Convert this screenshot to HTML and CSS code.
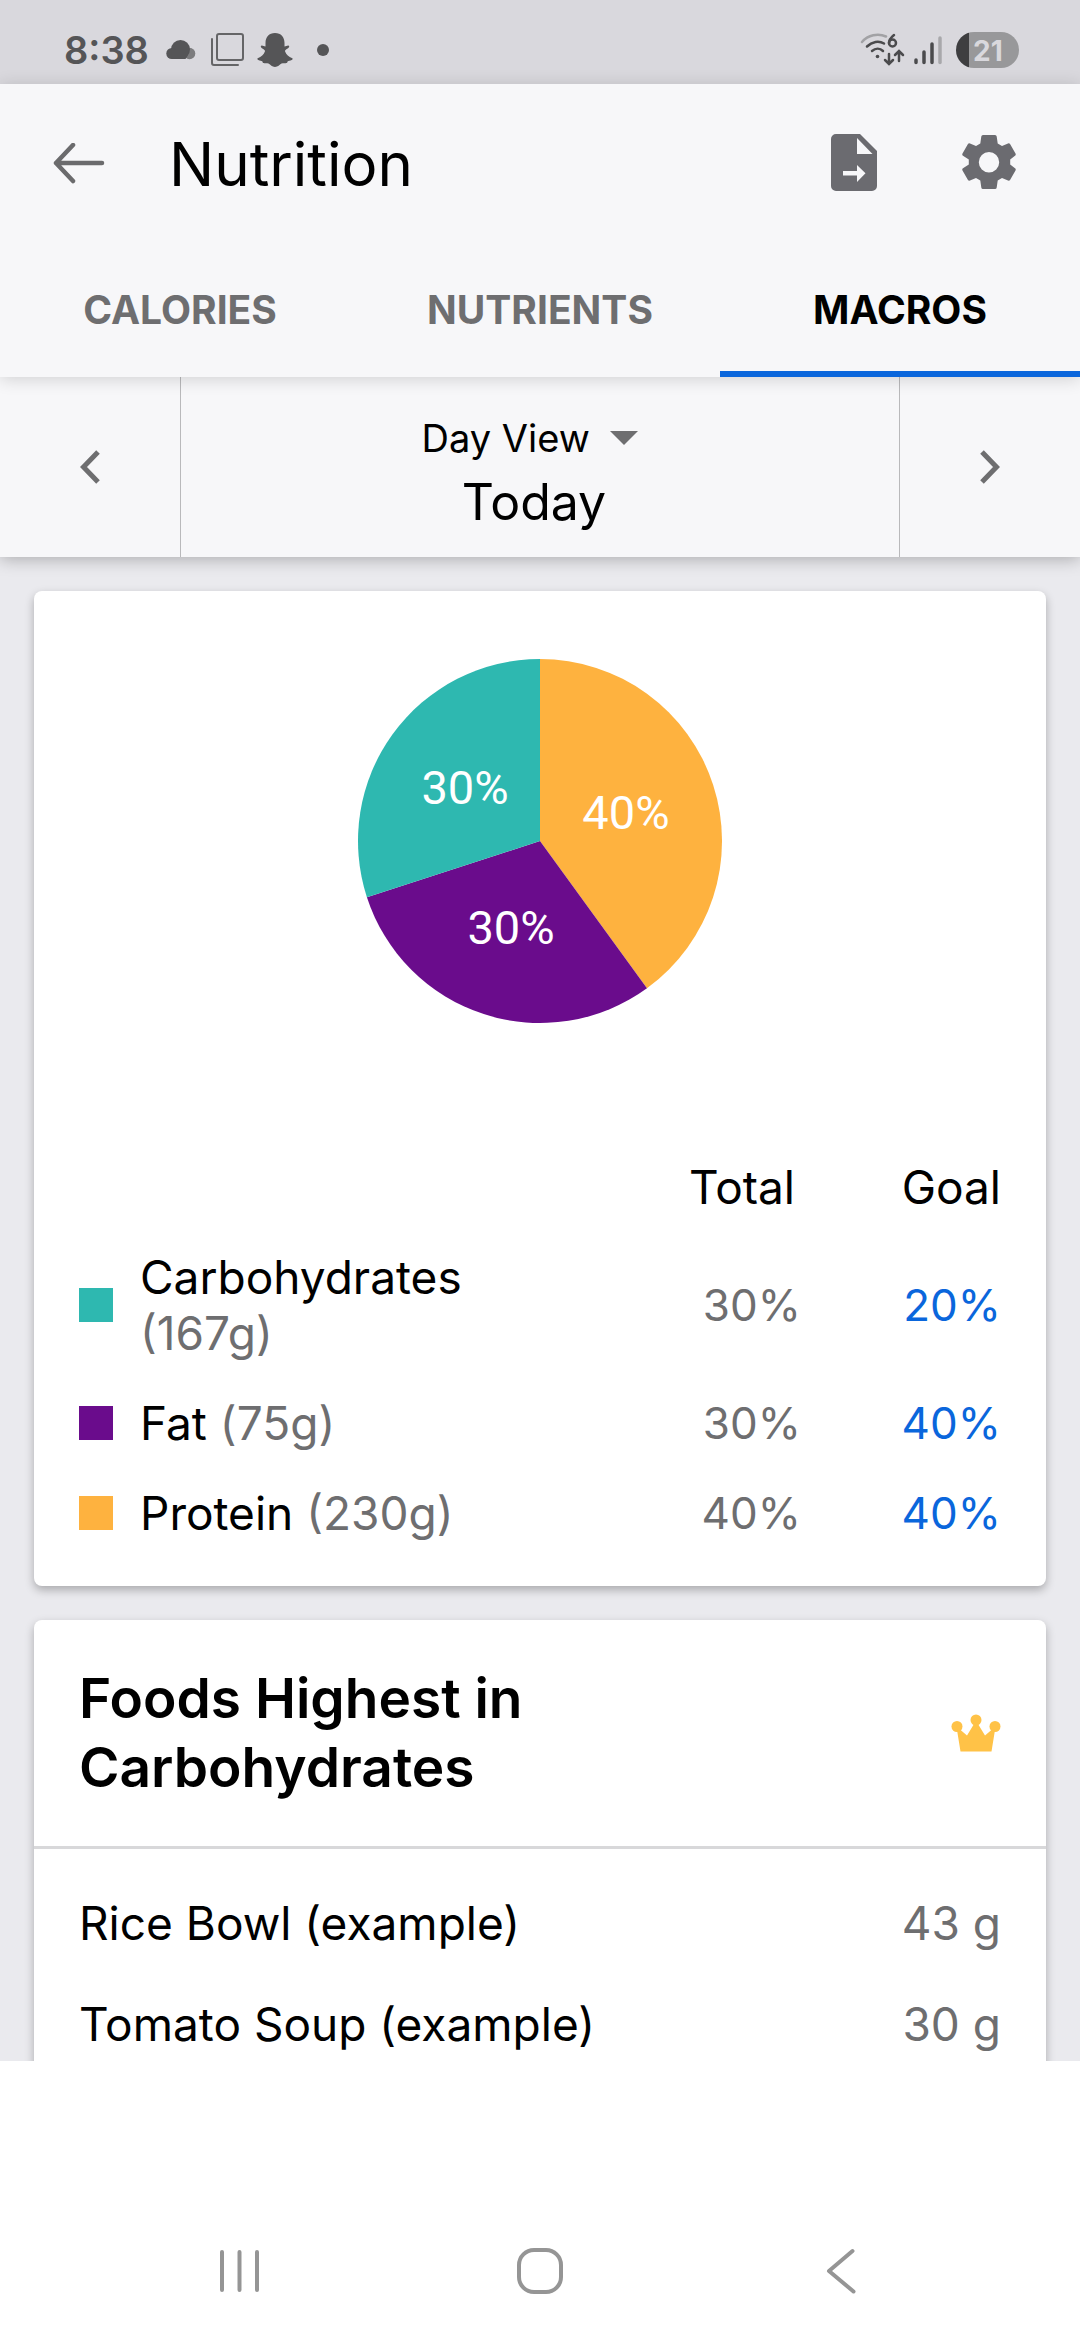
FILE: index.html
```html
<!DOCTYPE html>
<html lang="en">
<head>
<meta charset="utf-8">
<meta name="viewport" content="width=device-width, initial-scale=1">
<title>Nutrition</title>
<link rel="stylesheet" href="styles.css">
</head>
<body>
<div class="status-bar">
  <div class="status-left">
    <span class="clock">8:38</span>
    <svg class="icon-cloud" width="30" height="20" viewBox="0 0 30 20" fill="#555557" aria-hidden="true">
      <circle cx="23.500" cy="13.500" r="5.800" fill="#7c7c7e"/>
      <circle cx="14.500" cy="9.500" r="9.500"/>
      <circle cx="5.800" cy="13.500" r="5.500"/>
      <path d="M5.800 10h16.700q0 5.500-3 9H5.800z"/>
    </svg>
    <svg class="icon-cards" width="34" height="34" viewBox="0 0 34 34" fill="none" stroke="#656567" stroke-width="2" stroke-linecap="round" aria-hidden="true">
      <rect x="6" y="1" width="26" height="26" rx="2"/>
      <path d="M1 6v24a2 2 0 0 0 2 2h24"/>
    </svg>
    <svg class="icon-ghost" width="36" height="34" viewBox="0 0 36 34" fill="#555557" aria-hidden="true">
      <path d="M18 0c6 0 9.500 4 9.500 10v3.500c1.500 0 3-1.300 4.200-.8 1 .6.400 2-1 2.800-1.500 1-3 1.500-2.600 3 1.200 3 3.500 5.500 7.200 6.800.7.500.3 1.200-.6 1.600-1.500.8-3.200.6-3.900 1.300-.6.600-.2 1.700-1.200 1.900-1.500.2-3.300-.3-5.100.5C22.400 31.800 21 34 18 34s-4.400-2.200-6.500-3.400c-1.800-.8-3.600-.3-5.100-.5-1-.2-.6-1.300-1.200-1.900-.7-.7-2.400-.5-3.900-1.300-.9-.4-1.300-1.100-.6-1.600 3.700-1.300 6-3.800 7.200-6.800.4-1.500-1.100-2-2.600-3-1.400-.8-2-2.200-1-2.800 1.200-.5 2.700.8 4.200.8V10C8.500 4 12 0 18 0z"/>
    </svg>
    <span class="dot"></span>
  </div>
  <div class="status-right">
    <svg width="46" height="34" viewBox="0 0 46 34" fill="none" stroke="#4b4b4d" stroke-width="2.500" stroke-linecap="round" aria-hidden="true">
      <path d="M2 9C8 2 18 0 26 3.500" stroke="#a2a2a5"/>
      <path d="M7 13.500c5-5 12-6 17-3"/>
      <path d="M12 18c3.500-3 8-3 11 0"/>
      <circle cx="17.500" cy="23.500" r="1.800" fill="#4b4b4d" stroke="none"/>
      <path d="M34 2c-3 2.500-5 5-5 8"/>
      <circle cx="32.500" cy="10" r="3.500"/>
      <path d="M29 21v9.500M25 27l4 4 4-4M39 28v-9.500M35 22l4-4 4 4"/>
    </svg>
    <svg width="28" height="30" viewBox="0 0 28 30" stroke="#4b4b4d" stroke-width="3.500" stroke-linecap="round" aria-hidden="true">
      <path d="M2 25v2.500M10 17v10.500M18 9v18.500"/>
      <path d="M26 3v24.500" stroke="#a8a8ab"/>
    </svg>
    <span class="battery">21</span>
  </div>
</div>

<header class="app-header">
  <div class="toolbar">
    <button class="icon-button" type="button" aria-label="Back">
      <svg width="52" height="42" viewBox="0 0 52 42" fill="none" stroke="#6b6b6d" stroke-width="4.500" stroke-linecap="round" stroke-linejoin="round" aria-hidden="true">
        <path d="M49 20H3M20 2 3 20l17 18"/>
      </svg>
    </button>
    <h1 class="title">Nutrition</h1>
    <button class="icon-button export" type="button" aria-label="Export">
      <svg width="46" height="62" viewBox="0 0 46 62" fill="#6b6b70" aria-hidden="true">
        <path fill-rule="evenodd" d="M5 1h24l17 17v35a5 5 0 0 1-5 5H5a5 5 0 0 1-5-5V6a5 5 0 0 1 5-5zm21 4v16h15.500zM12 38v4.500h14V49l8.500-8.800L26 32v6z"/>
      </svg>
    </button>
    <button class="icon-button" type="button" aria-label="Settings">
      <svg width="54" height="60" viewBox="0 0 54 60" fill="#6b6b70" aria-hidden="true">
        <path fill-rule="evenodd" d="M21 1h12q1.500 0 1.700 1.500l1 7 4.300 2.500 6-2.600q1.400-.5 2.200.8l5.300 9.300q.7 1.300-.5 2.200L48.200 25.500v5L53 34.300q1.200.9.500 2.200l-5.300 9.300q-.8 1.300-2.200.8l-6-2.600-4.300 2.500-1 7Q34.500 55 33 55H21q-1.500 0-1.700-1.500l-1-7L14 44l-6 2.600q-1.400.5-2.200-.8L.5 36.500Q-.2 35.200 1 34.300l5.800-3.800v-5L1 21.700q-1.200-.9-.5-2.200l5.300-9.300Q6.600 8.900 8 9.400l6 2.600 4.300-2.500 1-7Q19.500 1 21 1zm6 17a10.200 10.200 0 1 0 0 20.400A10.200 10.200 0 0 0 27 18z"/>
      </svg>
    </button>
  </div>
  <nav class="tabs">
    <a class="tab" href="#calories">CALORIES</a>
    <a class="tab" href="#nutrients">NUTRIENTS</a>
    <a class="tab active" href="#macros" aria-current="page">MACROS</a>
  </nav>
</header>

<section class="date-bar">
  <button class="date-step" type="button" aria-label="Previous day">
    <svg width="20" height="34" viewBox="0 0 20 34" fill="none" stroke="#6e6e70" stroke-width="5" aria-hidden="true"><path d="M18 2 3.500 17 18 32"/></svg>
  </button>
  <div class="date-center">
    <label class="view-picker">
      <select class="view-select" aria-label="View">
        <option>Day View</option>
      </select>
      <svg width="56" height="14" viewBox="0 0 56 14" fill="#6e6e70" aria-hidden="true"><path d="M19 0h28L33 14z"/></svg>
    </label>
    <div class="date-value">Today</div>
  </div>
  <button class="date-step" type="button" aria-label="Next day">
    <svg width="20" height="34" viewBox="0 0 20 34" fill="none" stroke="#6e6e70" stroke-width="5" aria-hidden="true"><path d="m2 2 14.500 15L2 32"/></svg>
  </button>
</section>

<main class="content">
  <section class="card macros">
    <svg class="pie" width="364" height="364" viewBox="-182 -182 364 364" role="img" aria-label="Macro split">
      <path d="M0 0V-182A182 182 0 0 1 106.980 147.240z" fill="#feb23f"/>
      <path d="M0 0 106.980 147.240A182 182 0 0 1-173.090 56.240z" fill="#6a0c8c"/>
      <path d="M0 0-173.090 56.240A182 182 0 0 1 0-182z" fill="#2eb8b0"/>
      <text class="pie-label" x="86" y="-12">40%</text>
      <text class="pie-label" x="-29" y="103">30%</text>
      <text class="pie-label" x="-75" y="-37">30%</text>
    </svg>
    <table class="legend">
      <thead>
        <tr><th class="col-key"></th><th></th><th class="col-total">Total</th><th class="col-goal">Goal</th></tr>
      </thead>
      <tbody>
        <tr><td><span class="swatch carbs"></span></td><td class="name">Carbohydrates <span class="grams">(167g)</span></td><td class="total">30%</td><td class="goal">20%</td></tr>
        <tr><td><span class="swatch fat"></span></td><td class="name">Fat <span class="grams">(75g)</span></td><td class="total">30%</td><td class="goal">40%</td></tr>
        <tr><td><span class="swatch protein"></span></td><td class="name">Protein <span class="grams">(230g)</span></td><td class="total">40%</td><td class="goal">40%</td></tr>
      </tbody>
    </table>
  </section>

  <section class="card foods">
    <div class="foods-head">
      <h2 class="foods-title">Foods Highest in Carbohydrates</h2>
      <svg width="50" height="38" viewBox="0 0 50 38" fill="#ffc247" aria-hidden="true">
        <circle cx="6" cy="12.500" r="5.500"/><circle cx="25" cy="6" r="5.500"/><circle cx="44" cy="12.500" r="5.500"/>
        <path d="M9.500 37.500 6 16l3-.500 7 6L23 10h4l7 11.500 7-6 3 .5-3.500 21.500z"/>
      </svg>
    </div>
    <ul class="food-list">
      <li class="food"><span>Rice Bowl (example)</span><span class="amount">43 g</span></li>
      <li class="food"><span>Tomato Soup (example)</span><span class="amount">30 g</span></li>
    </ul>
  </section>
</main>

<div class="ad-slot"></div>

<nav class="system-nav" aria-label="System">
  <button class="nav-key" type="button" aria-label="Recents">
    <svg width="42" height="44" viewBox="0 0 42 44" stroke="#959595" stroke-width="4" stroke-linecap="round" aria-hidden="true"><path d="M4 3v38M21.500 3v38M39 3v38"/></svg>
  </button>
  <button class="nav-key" type="button" aria-label="Home">
    <svg width="46" height="46" viewBox="0 0 46 46" fill="none" stroke="#959595" stroke-width="4" aria-hidden="true"><rect x="2" y="2" width="42" height="42" rx="15"/></svg>
  </button>
  <button class="nav-key" type="button" aria-label="Back">
    <svg width="30" height="46" viewBox="0 0 30 46" fill="none" stroke="#959595" stroke-width="4" stroke-linecap="round" stroke-linejoin="round" aria-hidden="true"><path d="M26.500 3 3 23l24.500 20.500"/></svg>
  </button>
</nav>
</body>
</html>
```
FILE: styles.css
```css
* {
  box-sizing: border-box;
}

body {
  margin: 0;
  height: 100vh;
  display: flex;
  flex-direction: column;
  background: #fff;
  color: #000;
  font-family: Inter, "Liberation Sans", sans-serif;
  font-size: 46px;
  line-height: 56px;
}

button {
  border: 0;
  padding: 0;
  background: none;
}

svg {
  display: block;
  flex: none;
}

/* status bar */
.status-bar {
  flex: none;
  height: 84px;
  padding: 16px 61px 0 64px;
  display: flex;
  align-items: center;
  justify-content: space-between;
  background: #d9d8dd;
}

.status-left,
.status-right {
  display: flex;
  align-items: center;
}

.clock {
  margin-right: 17px;
  color: #555557;
  font-size: 38px;
  font-weight: 600;
}

.icon-cloud {
  margin-right: 15px;
}

.icon-cards {
  margin-right: 12px;
}

.icon-ghost {
  margin-right: 24px;
}

.dot {
  width: 12px;
  height: 12px;
  border-radius: 50%;
  background: #555557;
}

.status-right {
  gap: 8px;
}

.battery {
  width: 63px;
  height: 36px;
  margin-left: 6px;
  padding-left: 17px;
  border-radius: 18px;
  background: linear-gradient(to right, #3e3e40 13px, #98989a 13px);
  color: #d9d8dd;
  font-size: 28px;
  font-weight: 700;
  line-height: 38px;
}

/* header */
.app-header {
  flex: none;
  position: relative;
  z-index: 2;
  background: #f7f7f9;
  box-shadow: 0 2px 16px rgba(0, 0, 0, 0.16);
}

.toolbar {
  height: 160px;
  padding: 0 64px 0 53px;
  display: flex;
  align-items: center;
}

.title {
  flex: 1;
  margin: 0 0 0 64px;
  font-size: 60px;
  font-weight: 400;
  line-height: 72px;
}

.export {
  margin-right: 85px;
}

.tabs {
  display: flex;
}

.tab {
  flex: 1;
  height: 133px;
  padding-top: 4px;
  display: flex;
  align-items: center;
  justify-content: center;
  border-bottom: 6px solid transparent;
  color: #6e6e70;
  font-size: 39px;
  font-weight: 700;
  text-decoration: none;
}

.tab.active {
  border-bottom-color: #0a66dc;
  color: #000;
}

/* date bar */
.date-bar {
  flex: none;
  position: relative;
  z-index: 1;
  height: 180px;
  display: flex;
  background: #f7f7f9;
  box-shadow: 0 2px 16px rgba(0, 0, 0, 0.28);
}

.date-step {
  width: 180px;
  display: flex;
  align-items: center;
  justify-content: center;
}

.date-center {
  flex: 1;
  padding: 6px 12px 0 0;
  display: flex;
  flex-direction: column;
  align-items: center;
  justify-content: center;
  border: solid #b9b9bb;
  border-width: 0 1px;
  line-height: 64px;
}

.view-picker {
  display: flex;
  align-items: center;
}

.view-select {
  appearance: none;
  border: 0;
  padding: 0;
  background: none;
  color: #000;
  font: inherit;
  font-size: 38px;
}

.date-value {
  font-size: 50px;
}

/* scrolling content */
.content {
  flex: 1;
  min-height: 0;
  overflow: hidden;
  padding: 34px;
  display: flex;
  flex-direction: column;
  gap: 34px;
  background: #eaeaee;
}

.card {
  flex: none;
  border-radius: 8px;
  background: #fff;
  box-shadow: 0 4px 10px rgba(0, 0, 0, 0.28);
}

.macros {
  padding: 68px 45px 28px;
}

.pie {
  margin: 0 auto 119px;
}

.pie-label {
  fill: #fff;
  font-family: Roboto, sans-serif;
  font-size: 47px;
  text-anchor: middle;
}

.legend {
  width: 100%;
  border-collapse: collapse;
  table-layout: fixed;
}

.legend th,
.legend td {
  padding: 17px 0;
  font-weight: 400;
  text-align: right;
}

.legend .name {
  text-align: left;
}

.col-key {
  width: 61px;
}

.col-total {
  width: 231px;
}

.legend .col-total {
  padding-right: 6px;
}

.col-goal {
  width: 200px;
}

.grams,
.total,
.amount {
  color: #6e6e70;
}

.total,
.goal {
  font-size: 44px;
}

.goal {
  color: #0a66dc;
}

.swatch {
  display: block;
  width: 34px;
  height: 34px;
}

.carbs {
  background: #2eb8b0;
}

.fat {
  background: #6a0c8c;
}

.protein {
  background: #feb23f;
}

.foods {
  padding-bottom: 80px;
}

.foods-head {
  padding: 44px 45px;
  display: flex;
  align-items: center;
  gap: 120px;
  border-bottom: 3px solid #d8d8da;
}

.foods-title {
  flex: 1;
  margin: 0;
  font-size: 55px;
  font-weight: 600;
  line-height: 69px;
}

.food-list {
  margin: 0;
  padding: 23px 45px 0;
  list-style: none;
}

.food {
  height: 101px;
  display: flex;
  align-items: center;
  justify-content: space-between;
}

/* bottom of the screen */
.ad-slot {
  flex: none;
  height: 141px;
}

.system-nav {
  flex: none;
  height: 138px;
  padding: 0 88px;
  display: flex;
}

.nav-key {
  flex: 1;
  display: flex;
  align-items: center;
  justify-content: center;
}
```
